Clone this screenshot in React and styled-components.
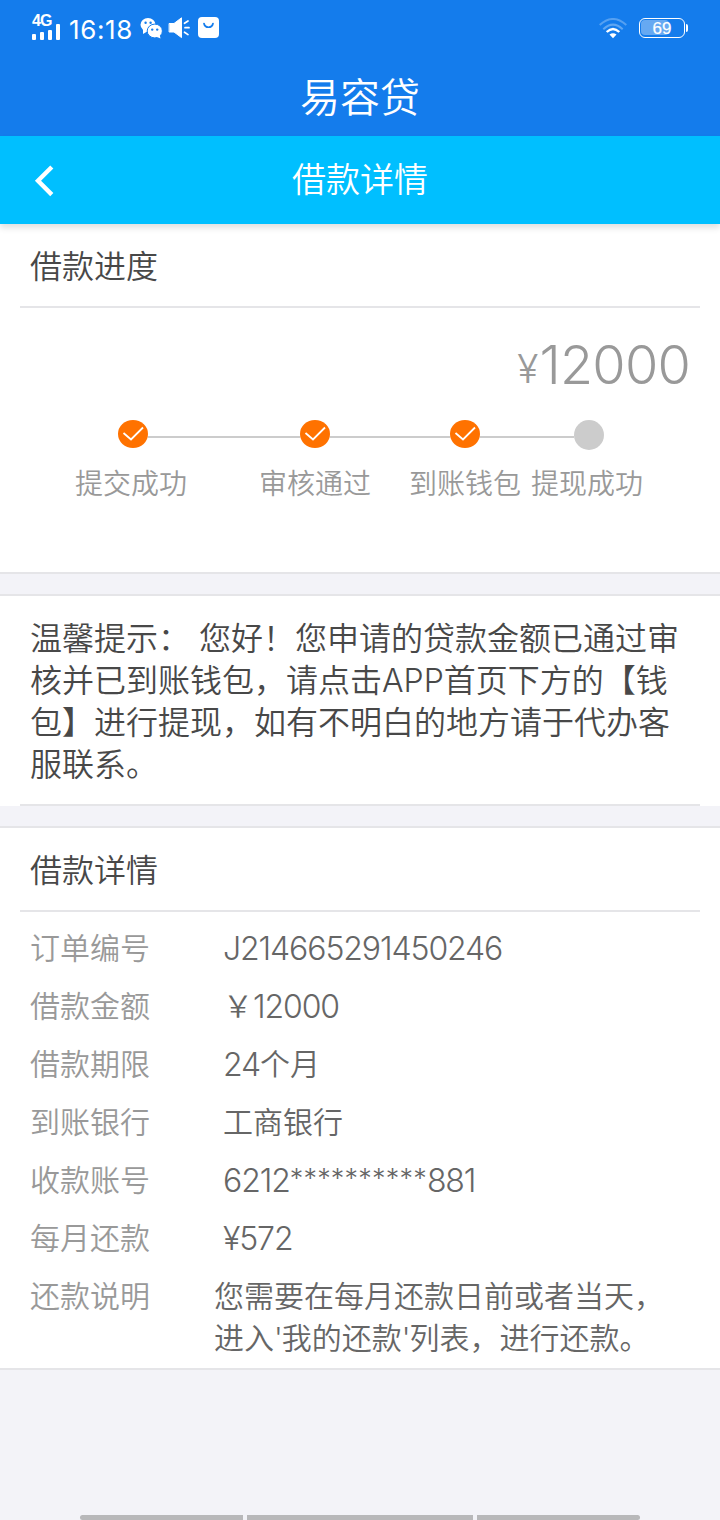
import styled, { createGlobalStyle } from 'styled-components';

const steps = [
  { label: '提交成功', done: true, line: 152, gap: 72 },
  { label: '审核通过', done: true, line: 120, gap: 38 },
  { label: '到账钱包', done: true, line: 94, gap: 10 },
  { label: '提现成功', done: false },
];

const details = [
  { label: '订单编号', value: 'J214665291450246' },
  { label: '借款金额', value: '￥12000' },
  { label: '借款期限', value: '24个月' },
  { label: '到账银行', value: '工商银行' },
  { label: '收款账号', value: '6212**********881' },
  { label: '每月还款', value: '¥572' },
];

export default function App() {
  return (<>
    <GlobalStyle />
    <Page>
      <StatusBar>
        <StatusGroup>
          <Signal />
          <Clock>16:18</Clock>
          <Chat />
          <Speaker />
          <Bag />
        </StatusGroup>
        <StatusGroup>
          <Wifi />
          <Battery><Charge /><Percent>69</Percent></Battery>
          <BatteryTip />
        </StatusGroup>
      </StatusBar>
      <AppTitle>易容贷</AppTitle>
      <NavBar>
        <Back />
        <NavTitle>借款详情</NavTitle>
      </NavBar>

      <Progress>
        <SectionTitle>借款进度</SectionTitle>
        <Amount><Yen>¥</Yen>12000</Amount>
        <Track>
          {steps.map((s) => <StepMark key={s.label} done={s.done} line={s.line} />)}
        </Track>
        <Labels>
          {steps.map((s) => <StepLabel key={s.label} $gap={s.gap}>{s.label}</StepLabel>)}
        </Labels>
      </Progress>

      <Notice>
        <NoticeText>温馨提示： 您好！您申请的贷款金额已通过审核并已到账钱包，请点击APP首页下方的【钱包】进行提现，如有不明白的地方请于代办客服联系。</NoticeText>
      </Notice>

      <Details>
        <SectionTitle>借款详情</SectionTitle>
        <Rows>
          {details.map((d) => (
            <Row key={d.label}>
              <Label>{d.label}</Label>
              <Value><Mixed text={d.value} /></Value>
            </Row>
          ))}
          <Row>
            <Label $wide>还款说明</Label>
            <Value>您需要在每月还款日前或者当天，<br />进入<Quote>'</Quote>我的还款<Quote>'</Quote>列表，进行还款。</Value>
          </Row>
        </Rows>
      </Details>
      <GestureBar>
        <Grip $w={163} $side="left" />
        <Grip $w={226} />
        <Grip $w={163} $side="right" />
      </GestureBar>
    </Page>
  </>)
}

// digits are set tighter than the Chinese text around them
function Mixed({ text }) {
  return text.split(/(\*+|[A-Z0-9¥]+)/).filter(Boolean).map((part, i) => {
    if (part[0] === '*') return <Stars key={i}>{part}</Stars>;
    if (/[A-Z0-9¥]/.test(part)) return <Num key={i}>{part}</Num>;
    return part;
  })
}

function StepMark({ done, line }) {
  return (<>
    {done
      ? <Dot $done><svg width="30" height="28" fill="none" stroke="#fff" strokeWidth="1.8">
          <path d="M5.5 13 L13 19.5 L25 7.5" />
        </svg></Dot>
      : <Dot />}
    {line && <Line $w={line} />}
  </>)
}

function Signal() {
  return (
    <SignalBox>
      <Network>4G</Network>
      <svg width="29" height="16" fill="#fff">
        <rect x="0" y="10" width="4" height="6" rx="1" />
        <rect x="8" y="8" width="4" height="8" rx="1" />
        <rect x="16" y="6" width="4" height="10" rx="1" />
        <rect x="24" y="0" width="4" height="16" rx="1" />
      </svg>
    </SignalBox>
  )
}

function Chat() {
  return (
    <svg width="24" height="24" fill="#fff">
      <ellipse cx="8" cy="8.8" rx="7.5" ry="6.8" />
      <path d="M3 13 L3 18 L8 15 Z" />
      <ellipse cx="14.8" cy="15" rx="7.6" ry="6.9" stroke="#147cec" strokeWidth="1" />
      <path d="M16 20.5 L20.5 22.5 L19.5 18 Z" />
      <g fill="#147cec">
        <circle cx="5.6" cy="6.8" r="1.2" />
        <circle cx="10.6" cy="6.8" r="1.2" />
        <circle cx="12.2" cy="13.6" r="1.2" />
        <circle cx="17.2" cy="13.6" r="1.2" />
      </g>
    </svg>
  )
}

function Speaker() {
  return (
    <svg width="24" height="24" fill="#fff" stroke="#fff" strokeLinecap="round">
      <path d="M1.5 7.5 H6 L13.5 1.8 V21.6 L6 16 H1.5 Z" strokeWidth="1" strokeLinejoin="round" />
      <path d="M16.5 7.3 L20 5 M17 11.7 H21 M16.5 16.2 L20 18.6" strokeWidth="1.7" />
    </svg>
  )
}

function Bag() {
  return (
    <svg width="24" height="22" fill="none">
      <rect x="2" y="0" width="21" height="21" rx="4" fill="#fff" />
      <path d="M8 6.5 C9 11.5 16 11.5 17 6.5" stroke="#147cec" strokeWidth="1.7" strokeLinecap="round" />
    </svg>
  )
}

function Wifi() {
  return (
    <svg width="28" height="21" fill="none" stroke="#fff" strokeWidth="2">
      <path d="M0.7 7 Q14 -5 27.3 7" opacity="0.28" />
      <path d="M4.3 11.2 Q14 2 23.7 11.2" opacity="0.32" />
      <path d="M7.7 14 Q14 7.8 20.3 14" strokeWidth="2.4" />
      <path d="M10.5 16.5 Q14 13.8 17.5 16.5 L14 20.3 Z" fill="#fff" stroke="none" />
    </svg>
  )
}

function Back() {
  return (
    <svg width="22" height="32" fill="none" stroke="#fff" strokeWidth="4.4">
      <path d="M19.8 2 L6 15.8 L19.8 29.6" />
    </svg>
  )
}

const GlobalStyle = createGlobalStyle`
  body {
    margin: 0;
    background: #f3f3f8;
    font-family: Inter, 'Noto Sans CJK SC', sans-serif;
    font-weight: 350;
  }
  * {
    box-sizing: border-box;
  }
  svg {
    display: block;
    flex: none;
  }
`;
const Page = styled.div`
  display: flex;
  flex-direction: column;
  width: 720px;
  height: 1520px;
  overflow: hidden;
`;
const StatusBar = styled.div`
  display: flex;
  justify-content: space-between;
  height: 56px;
  padding: 0 32px;
  color: #fff;
  background: #147cec;
`;
const StatusGroup = styled.div`
  display: flex;
  align-items: center;
  gap: 4px;
`;
const SignalBox = styled.div`
  width: 29px;
  height: 26px;
  margin-right: 4px;
  margin-top: -2px;
  display: flex;
  flex-direction: column;
  justify-content: space-between;
`;
const Network = styled.div`
  height: 10px;
  font-family: 'Liberation Sans', sans-serif;
  font-size: 16px;
  font-weight: 700;
  letter-spacing: -1px;
  line-height: 14px;
`;
const Clock = styled.div`
  width: 67px;
  font-size: 26px;
  font-weight: 400;
  letter-spacing: 0.6px;
  line-height: 56px;
  padding-top: 4px;
  white-space: nowrap;
`;
const Battery = styled.div`
  position: relative;
  width: 46px;
  height: 20px;
  margin-left: 8px;
  border: 1.5px solid #fff;
  border-radius: 6px;
  text-align: center;
`;
const Percent = styled.div`
  position: relative;
  font-family: 'Liberation Sans', sans-serif;
  font-size: 17px;
  font-weight: 400;
  line-height: 19px;
  -webkit-text-stroke: 0.2px #fff;
`;
const Charge = styled.span`
  position: absolute;
  top: 1px;
  left: 1px;
  width: 28px;
  height: 15px;
  border-radius: 4px;
  background: rgba(255, 255, 255, 0.35);
`;
const BatteryTip = styled.div`
  width: 2px;
  height: 8px;
  margin-left: -3px;
  border-radius: 0 2px 2px 0;
  background: #fff;
`;
const AppTitle = styled.div`
  height: 80px;
  color: #fff;
  background: #147cec;
  font-size: 40px;
  line-height: 84px;
  text-align: center;
`;
const NavBar = styled.div`
  position: relative;
  z-index: 1;
  display: flex;
  align-items: center;
  height: 88px;
  padding: 2px 32px 0;
  color: #fff;
  background: #00bfff;
  box-shadow: 0 4px 6px rgba(0, 0, 0, 0.12);
`;
const NavTitle = styled.div`
  flex: 1;
  margin-right: 22px;
  font-size: 34px;
  line-height: 80px;
  padding-bottom: 2px;
  text-align: center;
`;
const Card = styled.section`
  background: #fff;
  border: 0 solid #e5e5e8;
`;
const Progress = styled(Card)`
  height: 350px;
  border-bottom-width: 2px;
`;
const Notice = styled(Card)`
  height: 212px;
  margin-top: 20px;
  padding: 0 20px;
  border-top-width: 2px;
`;
const Details = styled(Card)`
  height: 544px;
  margin-top: 20px;
  border-width: 2px 0;
`;
const SectionTitle = styled.div`
  height: 84px;
  margin: 0 20px;
  padding: 0 10px;
  border-bottom: 2px solid #e5e5e8;
  color: #484848;
  font-size: 32px;
  line-height: 86px;
`;
const Amount = styled.div`
  display: flex;
  justify-content: flex-end;
  height: 112px;
  padding-right: 30px;
  color: #999;
  font-size: 54px;
  letter-spacing: -0.8px;
  line-height: 114px;
`;
const Yen = styled.span`
  margin-right: 2px;
  font-size: 39px;
  font-weight: 300;
  line-height: 122px;
`;
const Track = styled.div`
  display: flex;
  height: 30px;
  padding-left: 118px;
`;
const Dot = styled.div`
  width: 30px;
  height: ${(p) => (p.$done ? 28 : 30)}px;
  border-radius: 50%;
  background: ${(p) => (p.$done ? '#ff7200' : '#ccc')};
`;
const Line = styled.div`
  width: ${(p) => p.$w}px;
  height: 2px;
  margin-top: 16px;
  background: #ccc;
`;
const Labels = styled.div`
  display: flex;
  padding-left: 75px;
`;
const StepLabel = styled.div`
  margin-right: ${(p) => p.$gap || 0}px;
  color: #999;
  font-size: 28px;
  line-height: 68px;
  white-space: nowrap;
`;
const NoticeText = styled.div`
  height: 210px;
  padding: 22px 10px 0;
  border-bottom: 2px solid #e5e5e8;
  color: #484848;
  font-size: 32px;
  line-height: 42px;
`;
const Rows = styled.div`
  padding: 7px 30px 0;
`;
const Row = styled.div`
  display: flex;
  min-height: 58px;
  padding: 8px 0;
  font-size: 30px;
  line-height: 42px;
`;
const Label = styled.div`
  width: ${(p) => (p.$wide ? 184 : 193)}px;
  color: #999;
`;
const Value = styled.div`
  color: #666;
  white-space: nowrap;
`;
const Num = styled.span`
  font-size: 32px;
  letter-spacing: -1.1px;
  line-height: 0;
  vertical-align: -1px;
`;
const Stars = styled.span`
  font-size: 27px;
  letter-spacing: 0.2px;
  line-height: 0;
  vertical-align: 3px;
`;
const Quote = styled.span`
  letter-spacing: -1px;
`;
const GestureBar = styled.div`
  display: flex;
  justify-content: center;
  gap: 4px;
  margin-top: auto;
`;
const Grip = styled.div`
  width: ${(p) => p.$w}px;
  height: 5px;
  background: #b8b8ba;
  border-radius: ${(p) => ({ left: '3px 0 0 3px', right: '0 3px 3px 0' }[p.$side] || 0)};
`;
